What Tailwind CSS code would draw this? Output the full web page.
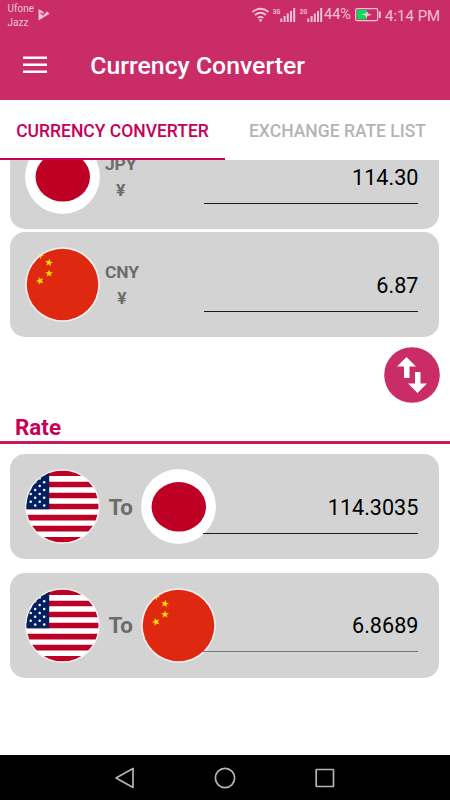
<!DOCTYPE html>
<html lang="en">
<head>
<meta charset="utf-8">
<title>Currency Converter</title>
<script src="https://cdn.jsdelivr.net/npm/@tailwindcss/browser@4"></script>
</head>
<body class="w-[450px] h-[800px] overflow-hidden bg-white flex flex-col font-['Roboto','Liberation_Sans',sans-serif]">
<svg class="absolute w-0 h-0">
  <defs>
    <clipPath id="disc"><circle cx="37.5" cy="37.5" r="36"/></clipPath>
    <path id="star" d="M0-4 1-1.2 4-1.2 1.6.6 2.5 3.4 0 1.7-2.5 3.4-1.6.6-4-1.2-1-1.2Z"/>
    <g id="dots2"><circle cx="19.2" r="1.25"/><circle cx="10.2" r="1.25"/></g>
    <g id="dots1"><circle cx="14.7" r="1.25"/><circle cx="5.7" r="1.25"/></g>
    <symbol id="us" viewBox="0 0 75 75">
      <circle cx="37.5" cy="37.5" r="37.3" fill="#f6f4f5"/>
      <g clip-path="url(#disc)">
        <path fill="#fff" d="M0 0h75v75H0z"/>
        <path stroke="#bd0026" stroke-width="5.55" d="M0 4.3h75M0 15.4h75M0 26.4h75M0 37.5h75M0 48.6h75M0 59.6h75M0 70.7h75"/>
        <path fill="#00205f" d="M0 0h24.2v40.3H0z"/>
        <g fill="#fff">
          <use href="#dots2" y="5.6"/><use href="#dots1" y="9.4"/><use href="#dots2" y="13.2"/><use href="#dots1" y="17.1"/><use href="#dots2" y="21"/><use href="#dots1" y="25"/><use href="#dots2" y="28.8"/><use href="#dots1" y="32.7"/><use href="#dots2" y="36.5"/>
        </g>
      </g>
    </symbol>
    <symbol id="cn" viewBox="0 0 75 75">
      <circle cx="37.5" cy="37.5" r="37.3" fill="#fbf3f2"/>
      <circle cx="37.5" cy="37.5" r="35.8" fill="#de2910"/>
      <g clip-path="url(#disc)"><g fill="#ffde00">
        <use href="#star" transform="translate(15 8.2) rotate(25)"/>
        <use href="#star" transform="translate(24 15.7) rotate(10)"/>
        <use href="#star" transform="translate(24 26.4)"/>
        <use href="#star" transform="translate(15 33.8) rotate(-20)"/>
      </g></g>
    </symbol>
    <symbol id="jp" viewBox="0 0 75 75">
      <circle cx="37.5" cy="37.5" r="37.4" fill="#fff"/>
      <ellipse cx="37.8" cy="37.8" rx="27.2" ry="24.8" fill="#bd0023"/>
    </symbol>
  </defs>
</svg>

<header class="h-[100px] shrink-0 bg-[#c92c67] text-white flex flex-col">
  <div class="h-[31px] flex justify-between text-[#f1c3d4]">
    <div class="flex pl-[7.500px] pt-[2px]">
      <div class="text-[10px] leading-[13.5px] w-[30px]">Ufone<br>Jazz</div>
      <svg class="w-[12px] h-[13px] mt-[6px]" viewBox="0 0 12 13"><path fill="#f1c3d4" d="M.5 1 4.500 3.200 6 5l2-2.500L11.500 5.800.5 12.500Z"/><path d="M2.600 4.800 5 7 9.500 2" fill="none" stroke="#c92c67" stroke-width="1.200"/></svg>
    </div>
    <div class="flex pr-[10px]">
      <svg class="w-[83px] h-[31px]" viewBox="252 0 83 31">
        <g fill="none" stroke="#f1c3d4" stroke-width="1.700">
          <path d="M252.500 12q8-6.500 16 0M255 15q5.500-4.500 11 0M257.700 18q2.800-2.400 5.600 0"/>
        </g>
        <circle cx="260.500" cy="20.300" r="1.400" fill="#f1c3d4"/>
        <path stroke="#f1c3d4" stroke-width="2" d="M281.300 22v-3.500M284.600 22v-6M287.800 22v-8.500M291 22v-11M294.200 22V8M308.300 22v-3.500M311.600 22v-6M314.800 22v-8.500M318 22v-11M321.200 22V8"/>
        <g fill="#f1c3d4" font-family="Roboto" font-weight="bold" font-size="8"><text x="272.800" y="14.200" textLength="7.500" lengthAdjust="spacingAndGlyphs">3G</text><text x="299.800" y="14.200" textLength="7.500" lengthAdjust="spacingAndGlyphs">2G</text></g>
      </svg>
      <span class="-ml-[11px] text-[14.5px] leading-[30px] w-[27px] whitespace-nowrap">44%</span>
      <svg class="w-[26px] h-[31px] ml-[4px]" viewBox="355 0 26 31"><rect x="355.700" y="8.700" width="22" height="12" rx="1.500" fill="none" stroke="#f1c3d4" stroke-width="1.300"/><path fill="#00e05a" d="M357.200 10h9.800v9.400h-9.800z"/><path fill="#f1c3d4" d="m361 14.200 5-1 .8-2 2.200 2.700 3.200.8-4.700 1.300-1 2-1.500-2.700ZM379 11.500h1.700v6.500H379z"/></svg>
      <span class="ml-[4px] text-[15px] leading-[32px] w-[55px] whitespace-nowrap">4:14 PM</span>
    </div>
  </div>
  <div class="flex-1 flex items-center pl-[23px]">
    <svg class="w-[24px] h-[18px] -mt-[2px]" viewBox="0 0 24 18"><path stroke="#fff" stroke-width="2.600" d="M0 1.800h24M0 8.800h24M0 15.800h24"/></svg>
    <h1 class="ml-[43.300px] pt-[1px] text-[24.8px] leading-none font-medium whitespace-nowrap">Currency Converter</h1>
  </div>
</header>

<nav class="h-[60px] shrink-0 flex text-[17.5px] font-medium whitespace-nowrap bg-white">
  <a class="w-1/2 flex items-center justify-center border-b-[2px] pt-[4px] border-[#c60056] text-[#c60056]">CURRENCY CONVERTER</a>
  <a class="w-1/2 flex items-center justify-center pt-[2px] text-[#b4b4b4]">EXCHANGE RATE LIST</a>
</nav>

<main class="h-[595px] shrink-0 overflow-hidden">
  <div class="-mt-[36px] ml-[10.4px] mr-[10.6px] h-[105px] rounded-[15px] bg-[#d3d3d3] flex items-center pl-[15px] pr-[21px]">
    <svg class="w-[75px] h-[75px] shrink-0"><use href="#jp"/></svg>
    <div class="ml-[4.500px] text-[17.4px] leading-[26px] font-bold text-[#6c6c6c] text-center">JPY<br>¥</div>
    <div class="ml-auto w-[214.500px] h-[54px] border-b border-[#1c1c1c] text-right text-[21.6px] leading-[55px] text-black">114.30</div>
  </div>
  <div class="mt-[3px] ml-[10.4px] mr-[10.6px] h-[105px] rounded-[15px] bg-[#d3d3d3] flex items-center pl-[15px] pr-[21px]">
    <svg class="w-[75px] h-[75px] shrink-0"><use href="#cn"/></svg>
    <div class="ml-[4.500px] text-[17.4px] leading-[26px] font-bold text-[#6c6c6c] text-center">CNY<br>¥</div>
    <div class="ml-auto w-[214.500px] h-[54px] border-b border-[#1c1c1c] text-right text-[21.6px] leading-[55px] text-black">6.87</div>
  </div>
  <div class="flex justify-end pt-[10px] pr-[10px] h-[78px]">
    <svg class="w-[56px] h-[56px]" viewBox="0 0 56 56"><circle cx="28" cy="28" r="27.800" fill="#c92c67"/><path fill="#fff" d="M22.500 10 32 19.500h-6.500V31h-5.500V19.500H13ZM31 25h5.500v11.500H43L33.500 46 24 36.500h7Z"/></svg>
  </div>
  <h2 class="h-[29px] pl-[15px] border-b-[3px] border-[#c9185c] text-[22.4px] leading-[25px] font-bold text-[#c60056]">Rate</h2>
  <div class="mt-[10px] ml-[10.4px] mr-[10.6px] h-[105px] rounded-[15px] bg-[#d3d3d3] flex items-center pl-[15px] pr-[21px]">
    <svg class="w-[75px] h-[75px] shrink-0"><use href="#us"/></svg>
    <span class="w-[40.600px] pt-[2px] text-center text-[22.4px] font-bold text-[#6c6c6c]">To</span>
    <svg class="w-[75px] h-[75px] shrink-0"><use href="#jp"/></svg>
    <div class="-ml-[12.600px] relative flex-1 h-[54px] border-b border-[#1c1c1c] text-right text-[21.6px] leading-[55px] text-black">114.3035</div>
  </div>
  <div class="mt-[13.500px] ml-[10.4px] mr-[10.6px] h-[105px] rounded-[15px] bg-[#d3d3d3] flex items-center pl-[15px] pr-[21px]">
    <svg class="w-[75px] h-[75px] shrink-0"><use href="#us"/></svg>
    <span class="w-[40.600px] pt-[2px] text-center text-[22.4px] font-bold text-[#6c6c6c]">To</span>
    <svg class="w-[75px] h-[75px] shrink-0"><use href="#cn"/></svg>
    <div class="-ml-[12.600px] relative flex-1 h-[54px] border-b border-[#777] text-right text-[21.6px] leading-[55px] text-black">6.8689</div>
  </div>
</main>

<footer class="h-[45px] shrink-0 bg-black flex items-center justify-center gap-[76px]">
  <svg class="w-[24px] h-[24px]" viewBox="0 0 24 24" fill="none" stroke="#b5b5b5" stroke-width="1.700"><path stroke-linejoin="round" d="M20 2.500v19L3 12Z"/></svg>
  <svg class="w-[24px] h-[24px]" viewBox="0 0 24 24" fill="none" stroke="#b5b5b5" stroke-width="1.700"><circle cx="12" cy="12" r="9.600"/></svg>
  <svg class="w-[24px] h-[24px]" viewBox="0 0 24 24" fill="none" stroke="#b5b5b5" stroke-width="1.700"><rect x="3.200" y="3.500" width="17.300" height="17" rx=".5"/></svg>
</footer>
</body>
</html>
